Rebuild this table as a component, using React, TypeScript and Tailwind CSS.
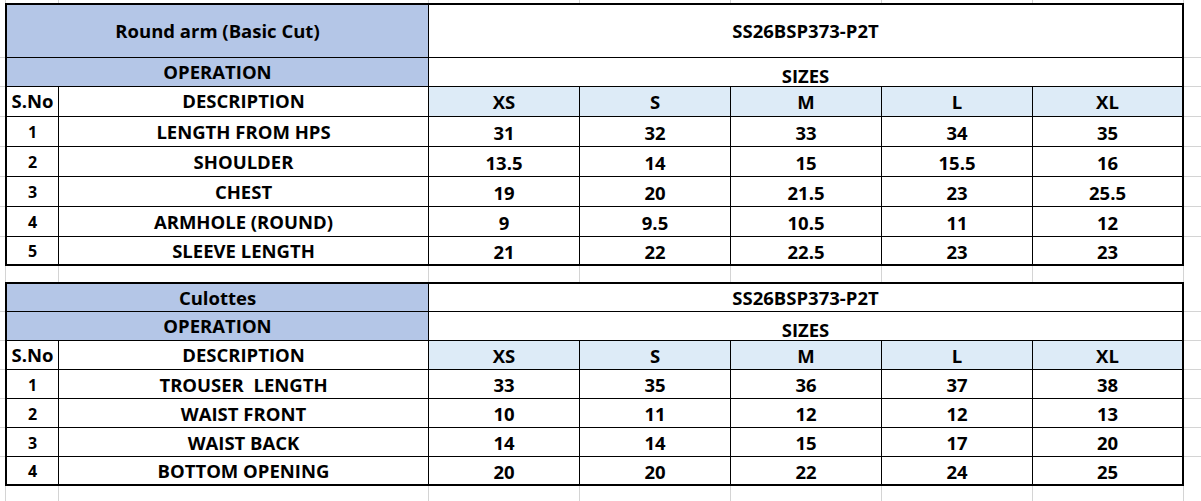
import React from "react";

type Row = { no: string; desc: string; vals: string[] };

const SIZES = ["XS", "S", "M", "L", "XL"];

const t1: Row[] = [
  { no: "1", desc: "LENGTH FROM HPS", vals: ["31", "32", "33", "34", "35"] },
  { no: "2", desc: "SHOULDER", vals: ["13.5", "14", "15", "15.5", "16"] },
  { no: "3", desc: "CHEST", vals: ["19", "20", "21.5", "23", "25.5"] },
  { no: "4", desc: "ARMHOLE (ROUND)", vals: ["9", "9.5", "10.5", "11", "12"] },
  { no: "5", desc: "SLEEVE LENGTH", vals: ["21", "22", "22.5", "23", "23"] },
];

const t2: Row[] = [
  { no: "1", desc: "TROUSER  LENGTH", vals: ["33", "35", "36", "37", "38"] },
  { no: "2", desc: "WAIST FRONT", vals: ["10", "11", "12", "12", "13"] },
  { no: "3", desc: "WAIST BACK", vals: ["14", "14", "15", "17", "20"] },
  { no: "4", desc: "BOTTOM OPENING", vals: ["20", "20", "22", "24", "25"] },
];

function Strip({ heights, grow }: { heights: number[]; grow?: boolean }) {
  return (
    <div className={grow ? "flex-1 flex flex-col" : "w-[5px] flex flex-col"}>
      <div className="h-[2px]" />
      {heights.map((h, i) => (
        <div
          key={i}
          className={i < heights.length - 1 ? "border-b border-[#d4d4d4]" : ""}
          style={{ height: i < heights.length - 1 ? h : h + 2 }}
        />
      ))}
    </div>
  );
}

function Filler({ h }: { h: number }) {
  const widths = [6, 53, 370, 151, 151, 151, 151, 151];
  return (
    <div className="flex shrink-0" style={{ height: h }}>
      {widths.map((w, i) => (
        <div key={i} className="border-r border-[#d4d4d4] shrink-0" style={{ width: w }} />
      ))}
      <div className="flex-1" />
    </div>
  );
}

function Table({
  title,
  rows,
  heights,
  tall,
}: {
  title: string;
  rows: Row[];
  heights: number[];
  tall?: boolean;
}) {
  const rowsCls = tall
    ? "grid-rows-[53px_29px_30px_30px_30px_30px_30px_27px]"
    : "grid-rows-[28px_29px_29px_29px_29px_29px_27px]";
  const cell = "flex items-center justify-center border-black overflow-hidden";
  return (
    <div className="flex shrink-0">
      <Strip heights={heights} />
      <div
        className={`grid grid-cols-[52px_370px_151px_151px_151px_151px_149px] ${rowsCls} border-2 border-black w-[1179px] shrink-0`}
      >
        <div className={`${cell} col-span-2 bg-[#b4c6e7] border-r border-b pt-[1px]`}>{title}</div>
        <div className={`${cell} col-span-5 border-b pt-[1px]`}>SS26BSP373-P2T</div>
        <div className={`${cell} col-span-2 bg-[#b4c6e7] border-r border-b`}>OPERATION</div>
        <div className={`${cell} col-span-5 border-b items-end pb-[1px]`}>SIZES</div>
        <div className={`${cell} border-r border-b`}>S.No</div>
        <div className={`${cell} border-r border-b`}>DESCRIPTION</div>
        {SIZES.map((s, i) => (
          <div
            key={s}
            className={`${cell} bg-[#ddebf7] border-b pt-[2px] ${i < 4 ? "border-r" : ""}`}
          >
            {s}
          </div>
        ))}
        {rows.map((r, ri) => {
          const last = ri === rows.length - 1;
          const b = last ? "" : "border-b";
          return (
            <React.Fragment key={r.no}>
              <div className={`${cell} border-r ${b} text-[16px] pt-[1px]`}>{r.no}</div>
              <div className={`${cell} border-r ${b} whitespace-pre pt-[2px]`}>{r.desc}</div>
              {r.vals.map((v, i) => (
                <div key={i} className={`${cell} ${b} ${i < 4 ? "border-r" : ""} pt-[3px]`}>
                  {v}
                </div>
              ))}
            </React.Fragment>
          );
        })}
      </div>
      <Strip heights={heights} grow />
    </div>
  );
}

export default function App() {
  return (
    <div
      className="w-[1201px] h-[501px] bg-white flex flex-col overflow-hidden text-black font-bold text-[18.5px] leading-none"
      style={{ fontFamily: "'Open Sans', Lato, sans-serif" }}
    >
      <Filler h={3} />
      <Table
        title="Round arm (Basic Cut)"
        rows={t1}
        heights={[53, 29, 30, 30, 30, 30, 30, 27]}
        tall
      />
      <Filler h={16} />
      <Table title="Culottes" rows={t2} heights={[28, 29, 29, 29, 29, 29, 27]} />
      <Filler h={15} />
    </div>
  );
}
